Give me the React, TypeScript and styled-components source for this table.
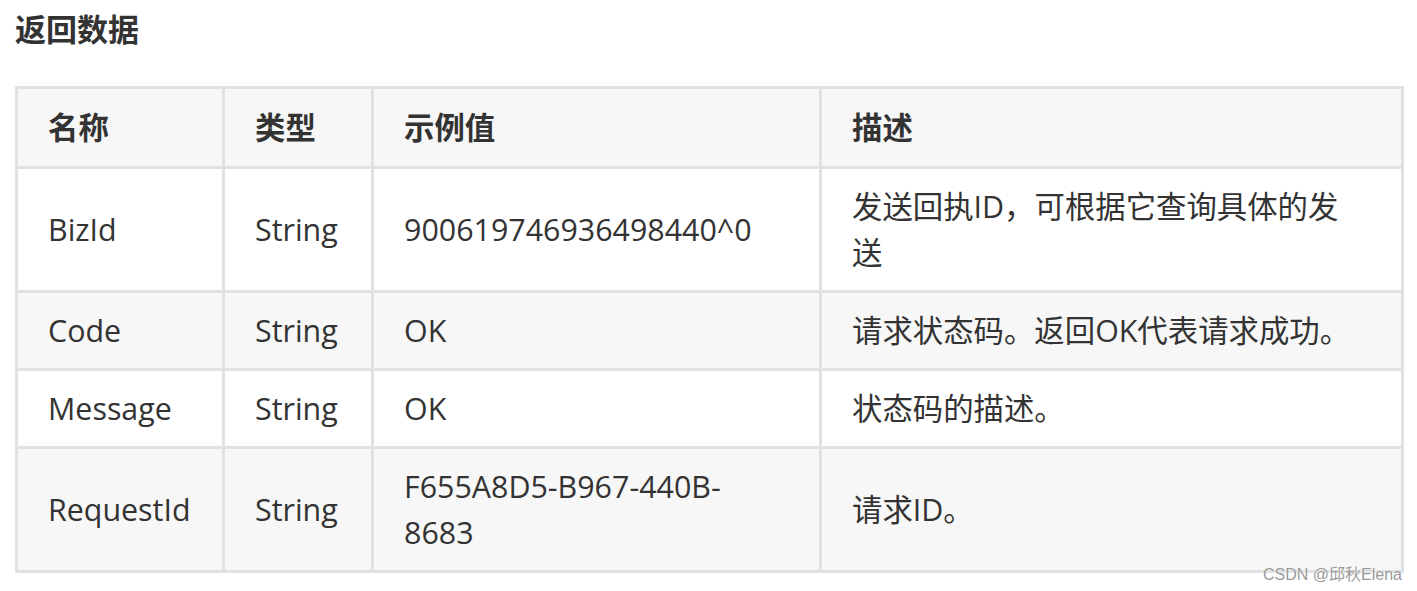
import React from 'react';
import styled, { createGlobalStyle } from 'styled-components';

const GlobalStyle = createGlobalStyle`
  html, body {
    margin: 0;
    padding: 0;
    background: #ffffff;
  }
  body {
    font-family: "Open Sans", "Noto Sans CJK SC", sans-serif;
    color: #333333;
  }
`;

const Page = styled.div`
  position: relative;
  width: 1417px;
  height: 591px;
  padding: 0 15px;
  box-sizing: border-box;
  overflow: hidden;
`;

const Heading = styled.h4`
  margin: 0;
  padding-top: 8px;
  font-size: 31px;
  line-height: 42px;
  font-weight: 700;
  color: #333333;
  font-family: "Open Sans", "Noto Sans CJK SC", sans-serif;
`;

const Table = styled.table`
  margin-top: 36px;
  width: 1389px;
  border-collapse: collapse;
  table-layout: fixed;
  border: 3px solid #dfe2e5;
  font-size: 30.4px;
  line-height: 46px;
`;

const Col = styled.col<{ $width?: number }>`
  width: ${({ $width }) => ($width ? `${$width}px` : 'auto')};
`;

const Row = styled.tr<{ $striped?: boolean }>`
  background: ${({ $striped }) => ($striped ? '#f7f7f7' : '#ffffff')};
`;

const HeadCell = styled.th`
  border: 3px solid #dfe2e5;
  padding: 15.5px 20px 15.5px 30px;
  text-align: left;
  font-weight: 700;
  color: #333333;
  background: #f7f7f7;
`;

const Cell = styled.td<{ $roomy?: boolean }>`
  border: 3px solid #dfe2e5;
  padding: 14.5px ${({ $roomy }) => ($roomy ? '40px' : '20px')} 14.5px 30px;
  text-align: left;
  vertical-align: middle;
  color: #333333;
`;

const Watermark = styled.div`
  position: absolute;
  right: 15px;
  bottom: 7px;
  font-family: "Liberation Sans", "Noto Sans CJK SC", sans-serif;
  font-size: 16px;
  line-height: 18px;
  color: #9a9a9a;
  text-shadow: 0 0 1px #ffffff;
`;

type Field = {
  name: string;
  type: string;
  example: string;
  desc: string;
};

const fields: Field[] = [
  {
    name: 'BizId',
    type: 'String',
    example: '900619746936498440^0',
    desc: '发送回执ID，可根据它查询具体的发送',
  },
  { name: 'Code', type: 'String', example: 'OK', desc: '请求状态码。返回OK代表请求成功。' },
  { name: 'Message', type: 'String', example: 'OK', desc: '状态码的描述。' },
  {
    name: 'RequestId',
    type: 'String',
    example: 'F655A8D5-B967-440B-8683',
    desc: '请求ID。',
  },
];

const App: React.FC = () => {
  return (
    <>
      <GlobalStyle />
      <Page>
        <Heading>返回数据</Heading>
        <Table>
          <colgroup>
            <Col $width={207} />
            <Col $width={149} />
            <Col $width={448} />
            <Col />
          </colgroup>
          <thead>
            <Row $striped>
              <HeadCell>名称</HeadCell>
              <HeadCell>类型</HeadCell>
              <HeadCell>示例值</HeadCell>
              <HeadCell>描述</HeadCell>
            </Row>
          </thead>
          <tbody>
            {fields.map((f, i) => (
              <Row key={f.name} $striped={i % 2 === 1}>
                <Cell>{f.name}</Cell>
                <Cell>{f.type}</Cell>
                <Cell $roomy>{f.example}</Cell>
                <Cell $roomy>{f.desc}</Cell>
              </Row>
            ))}
          </tbody>
        </Table>
        <Watermark>CSDN @邱秋Elena</Watermark>
      </Page>
    </>
  );
};

export default App;
